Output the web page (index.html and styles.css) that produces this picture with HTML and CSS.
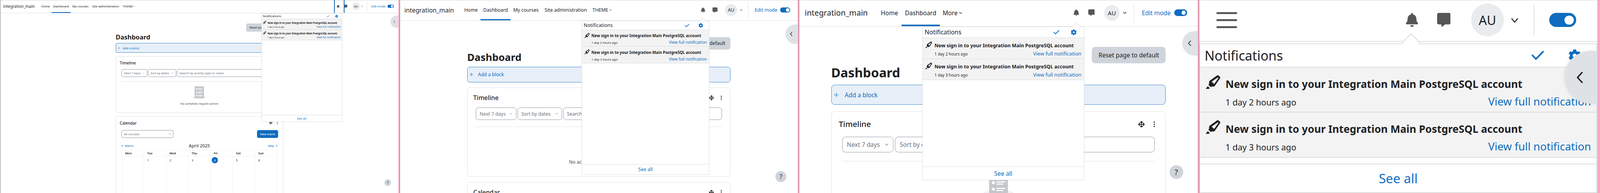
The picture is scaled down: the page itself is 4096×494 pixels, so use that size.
FILE: index.html
```html
<!DOCTYPE html>
<html lang="en">
<head>
<meta charset="utf-8">
<title>Dashboard</title>
<link rel="stylesheet" href="styles.css">
</head>
<body>
<svg class="defs" width="0" height="0" aria-hidden="true">
  <symbol id="i-bell" viewBox="0 0 448 512"><path d="M224 512c35.32 0 63.97-28.65 63.97-64H160.03c0 35.35 28.65 64 63.97 64zm215.39-149.71c-19.32-20.76-55.47-51.99-55.47-154.29 0-77.7-54.48-139.9-127.94-155.16V32c0-17.67-14.32-32-31.98-32s-31.98 14.33-31.98 32v20.84C118.56 68.1 64.08 130.3 64.08 208c0 102.3-36.15 133.53-55.47 154.29-6 6.45-8.66 14.16-8.61 21.71.11 16.4 12.98 32 32.1 32h383.8c19.12 0 32-15.6 32.1-32 .05-7.55-2.61-15.27-8.61-21.71z"/></symbol>
  <symbol id="i-msg" viewBox="0 0 64 66"><path d="M8 0h48a8 8 0 0 1 8 8v38a8 8 0 0 1-8 8H38L22 65.500a2 2 0 0 1-2-1.500V54H8a8 8 0 0 1-8-8V8a8 8 0 0 1 8-8z"/></symbol>
  <symbol id="i-gear" viewBox="0 0 512 512"><path d="M487.4 315.700l-42.600-24.600c4.300-23.200 4.300-47 0-70.200l42.600-24.600c4.900-2.800 7.100-8.600 5.500-14-11.100-35.600-30-67.800-54.700-94.600-3.800-4.100-10-5.100-14.800-2.300L380.800 110c-17.900-15.400-38.500-27.300-60.800-35.100V25.800c0-5.600-3.900-10.500-9.400-11.700-36.700-8.200-74.300-7.800-109.200 0-5.500 1.200-9.400 6.100-9.400 11.700V75c-22.200 7.900-42.800 19.800-60.800 35.100L88.700 85.500c-4.900-2.800-11-1.900-14.800 2.300-24.700 26.700-43.600 58.900-54.700 94.600-1.700 5.400.6 11.200 5.500 14L67.300 221c-4.300 23.200-4.300 47 0 70.200l-42.600 24.600c-4.900 2.800-7.100 8.600-5.500 14 11.100 35.600 30 67.800 54.700 94.600 3.800 4.100 10 5.100 14.800 2.300l42.600-24.600c17.900 15.400 38.500 27.300 60.800 35.100v49.200c0 5.600 3.900 10.500 9.400 11.700 36.700 8.200 74.300 7.800 109.200 0 5.500-1.200 9.400-6.100 9.400-11.700v-49.200c22.200-7.900 42.800-19.800 60.800-35.100l42.600 24.600c4.900 2.800 11 1.900 14.800-2.300 24.700-26.700 43.600-58.900 54.700-94.600 1.500-5.500-.7-11.300-5.600-14.100zM256 336c-44.100 0-80-35.900-80-80s35.900-80 80-80 80 35.900 80 80-35.900 80-80 80z"/></symbol>
  <symbol id="i-check" viewBox="0 0 60 44"><path d="M4 22l17 18L56 4" fill="none" stroke="currentColor" stroke-width="8" stroke-linecap="round" stroke-linejoin="round"/></symbol>
  <symbol id="i-pen" viewBox="0 0 206 200"><path fill-rule="evenodd" d="M160 6q10-6 18 0l22 20q8 8 2 18l-76 112q-6 8-16 8H88q-6 0-10 4-6 4-12 0L40 144q-6-6 0-12 6-6 6-14V96q0-8 8-14zM168 34l-86 60 36 34 58-84q2-4-2-8-4-4-6-2z"/><path d="M26 160l30 26q-4 8-12 10l-38 2q-8 0-4-8z"/></symbol>
  <symbol id="i-chev" viewBox="0 0 16 16"><path d="M3 5.500l5 6 5-6" fill="none" stroke="currentColor" stroke-width="1.800" stroke-linecap="round" stroke-linejoin="round"/></symbol>
  <symbol id="i-left" viewBox="0 0 16 28"><path d="M13 3L3 14l10 11" fill="none" stroke="currentColor" stroke-width="3" stroke-linecap="round" stroke-linejoin="round"/></symbol>
  <symbol id="i-plus" viewBox="0 0 16 16"><path d="M8 1.500v13M1.500 8h13" fill="none" stroke="currentColor" stroke-width="1.600" stroke-linecap="round"/></symbol>
  <symbol id="i-move" viewBox="0 0 16 16"><path d="M8 1v14M1 8h14" fill="none" stroke="currentColor" stroke-width="1.800"/><path d="M8 0l3.400 3.600H4.600zM8 16l-3.400-3.600h6.800zM0 8l3.400-3.400v6.800zM16 8l-3.400 3.400V4.600z"/></symbol>
  <symbol id="i-dots" viewBox="0 0 4 16"><circle cx="2" cy="2" r="1.900"/><circle cx="2" cy="8" r="1.900"/><circle cx="2" cy="14" r="1.900"/></symbol>
  <symbol id="i-empty" viewBox="0 0 70 60"><ellipse cx="35" cy="52" rx="35" ry="7" fill="#f1f2f3"/><rect x="13" y="0" width="44" height="56" fill="#c4c8cc"/><g fill="#fff"><circle cx="23" cy="12" r="3.500"/><circle cx="23" cy="28" r="3.500"/><circle cx="23" cy="43" r="3.500"/><rect x="30" y="9" width="21" height="2.500"/><rect x="30" y="14" width="16" height="2.500"/><rect x="30" y="25" width="21" height="2.500"/><rect x="30" y="30" width="16" height="2.500"/><rect x="30" y="40" width="21" height="2.500"/><rect x="30" y="45" width="16" height="2.500"/></g></symbol>
</svg>

<div class="wall">

<section class="panel p1">
  <header class="top">
    <span class="brand">integration_main</span>
    <nav class="nav">
      <a class="nav-i w-home">Home</a>
      <a class="nav-i w-dash active">Dashboard</a>
      <a class="nav-i w-my">My courses</a>
      <a class="nav-i w-site">Site administration</a>
      <a class="nav-i w-more">THEME <svg class="caret"><use href="#i-chev"/></svg></a>
    </nav>
    <div class="tools">
      <span class="tool focus"><svg class="bell"><use href="#i-bell"/></svg></span>
      <span class="tool"><svg class="msg"><use href="#i-msg"/></svg></span>
      <span class="avatar">AU</span>
      <svg class="ch"><use href="#i-chev"/></svg>
      <span class="sep"></span>
      <span class="edit-label">Edit mode</span>
      <span class="toggle"><i></i></span>
    </div>
  </header>
  <main class="main">
    <div class="reset-row"><button class="reset">Reset page to default</button></div>
    <h1>Dashboard</h1>
    <div class="addblock"><svg class="plus"><use href="#i-plus"/></svg><span>Add a block</span></div>
    <div class="card timeline">
      <div class="card-head"><h2>Timeline</h2><svg class="move"><use href="#i-move"/></svg><svg class="dots"><use href="#i-dots"/></svg></div>
      <div class="filters">
        <div class="fld f1">Next 7 days <svg class="ch2"><use href="#i-chev"/></svg></div>
        <div class="fld f2">Sort by dates <svg class="ch2"><use href="#i-chev"/></svg></div>
        <div class="fld f3">Search by activity type or name</div>
      </div>
      <div class="rule"></div>
      <div class="empty"><svg class="emp"><use href="#i-empty"/></svg><p>No activities require action</p></div>
    </div>
    <div class="card calendar">
      <div class="card-head"><h2>Calendar</h2><svg class="move"><use href="#i-move"/></svg><svg class="dots"><use href="#i-dots"/></svg></div>
      <div class="cal-bar">
        <div class="fld sel">All courses <svg class="ch3"><use href="#i-chev"/></svg></div>
        <button class="newev">New event</button>
      </div>
      <div class="cal-nav">
        <a><i class="tri-l"></i>March</a>
        <strong>April 2025</strong>
        <a>May<i class="tri-r"></i></a>
      </div>
      <div class="cal-grid">
        <b>Mon</b><b>Tue</b><b>Wed</b><b>Thu</b><b>Fri</b><b>Sat</b><b>Sun</b>
        <span></span><span>1</span><span>2</span><span>3</span><span class="today"><em>4</em></span><span>5</span><span>6</span>
      </div>
    </div>
  </main>
  <div class="pop">
    <i class="arrow"></i>
    <div class="pop-head"><span>Notifications</span><svg class="check"><use href="#i-check"/></svg><svg class="gear"><use href="#i-gear"/></svg></div>
    <div class="note"><svg class="pen"><use href="#i-pen"/></svg><div class="note-b"><strong>New sign in to your Integration Main PostgreSQL account</strong><div class="note-f"><span>1 day 2 hours ago</span><a>View full notification</a></div></div></div>
    <div class="note"><svg class="pen"><use href="#i-pen"/></svg><div class="note-b"><strong>New sign in to your Integration Main PostgreSQL account</strong><div class="note-f"><span>1 day 3 hours ago</span><a>View full notification</a></div></div></div>
    <div class="pop-space"></div>
    <div class="pop-foot">See all</div>
  </div>
  <div class="drawer"><svg class="left"><use href="#i-left"/></svg></div>
  <div class="help">?</div>
</section>

<section class="panel p2">
  <header class="top">
    <span class="brand">integration_main</span>
    <nav class="nav">
      <a class="nav-i w-home">Home</a>
      <a class="nav-i w-dash active">Dashboard</a>
      <a class="nav-i w-my">My courses</a>
      <a class="nav-i w-site">Site administration</a>
      <a class="nav-i w-more">THEME <svg class="caret"><use href="#i-chev"/></svg></a>
    </nav>
    <div class="tools">
      <span class="tool"><svg class="bell"><use href="#i-bell"/></svg></span>
      <span class="tool"><svg class="msg"><use href="#i-msg"/></svg></span>
      <span class="avatar">AU</span>
      <svg class="ch"><use href="#i-chev"/></svg>
      <span class="sep"></span>
      <span class="edit-label">Edit mode</span>
      <span class="toggle"><i></i></span>
    </div>
  </header>
  <main class="main">
    <div class="reset-row"><button class="reset">Reset page to default</button></div>
    <h1>Dashboard</h1>
    <div class="addblock"><svg class="plus"><use href="#i-plus"/></svg><span>Add a block</span></div>
    <div class="card timeline">
      <div class="card-head"><h2>Timeline</h2><svg class="move"><use href="#i-move"/></svg><svg class="dots"><use href="#i-dots"/></svg></div>
      <div class="filters">
        <div class="fld f1">Next 7 days <svg class="ch2"><use href="#i-chev"/></svg></div>
        <div class="fld f2">Sort by dates <svg class="ch2"><use href="#i-chev"/></svg></div>
        <div class="fld f3">Search by activity type or name</div>
      </div>
      <div class="rule"></div>
      <div class="empty"><svg class="emp"><use href="#i-empty"/></svg><p>No activities require action</p></div>
    </div>
    <div class="card calendar">
      <div class="card-head"><h2>Calendar</h2><svg class="move"><use href="#i-move"/></svg><svg class="dots"><use href="#i-dots"/></svg></div>
    </div>
  </main>
  <div class="pop">
    <i class="arrow"></i>
    <div class="pop-head"><span>Notifications</span><svg class="check"><use href="#i-check"/></svg><svg class="gear"><use href="#i-gear"/></svg></div>
    <div class="note"><svg class="pen"><use href="#i-pen"/></svg><div class="note-b"><strong>New sign in to your Integration Main PostgreSQL account</strong><div class="note-f"><span>1 day 2 hours ago</span><a>View full notification</a></div></div></div>
    <div class="note"><svg class="pen"><use href="#i-pen"/></svg><div class="note-b"><strong>New sign in to your Integration Main PostgreSQL account</strong><div class="note-f"><span>1 day 3 hours ago</span><a>View full notification</a></div></div></div>
    <div class="pop-space"></div>
    <div class="pop-foot">See all</div>
  </div>
  <div class="drawer"><svg class="left"><use href="#i-left"/></svg></div>
  <div class="help">?</div>
</section>

<section class="panel p3">
  <header class="top">
    <span class="brand">integration_main</span>
    <nav class="nav">
      <a class="nav-i w-home">Home</a>
      <a class="nav-i w-dash active">Dashboard</a>
      <a class="nav-i w-my">More <svg class="caret"><use href="#i-chev"/></svg></a>
    </nav>
    <div class="tools">
      <span class="tool"><svg class="bell"><use href="#i-bell"/></svg></span>
      <span class="tool"><svg class="msg"><use href="#i-msg"/></svg></span>
      <span class="avatar">AU</span>
      <svg class="ch"><use href="#i-chev"/></svg>
      <span class="sep"></span>
      <span class="edit-label">Edit mode</span>
      <span class="toggle"><i></i></span>
    </div>
  </header>
  <main class="main">
    <div class="reset-row"><button class="reset">Reset page to default</button></div>
    <h1>Dashboard</h1>
    <div class="addblock"><svg class="plus"><use href="#i-plus"/></svg><span>Add a block</span></div>
    <div class="card timeline">
      <div class="card-head"><h2>Timeline</h2><svg class="move"><use href="#i-move"/></svg><svg class="dots"><use href="#i-dots"/></svg></div>
      <div class="filters">
        <div class="fld f1">Next 7 days <svg class="ch2"><use href="#i-chev"/></svg></div>
        <div class="fld f2">Sort by dates <svg class="ch2"><use href="#i-chev"/></svg></div>
        <div class="fld f3">Search by activity type or name</div>
      </div>
      <div class="rule"></div>
      <div class="empty"><svg class="emp"><use href="#i-empty"/></svg></div>
    </div>
  </main>
  <div class="pop">
    <i class="arrow"></i>
    <div class="pop-head"><span>Notifications</span><svg class="check"><use href="#i-check"/></svg><svg class="gear"><use href="#i-gear"/></svg></div>
    <div class="note"><svg class="pen"><use href="#i-pen"/></svg><div class="note-b"><strong>New sign in to your Integration Main PostgreSQL account</strong><div class="note-f"><span>1 day 2 hours ago</span><a>View full notification</a></div></div></div>
    <div class="note"><svg class="pen"><use href="#i-pen"/></svg><div class="note-b"><strong>New sign in to your Integration Main PostgreSQL account</strong><div class="note-f"><span>1 day 3 hours ago</span><a>View full notification</a></div></div></div>
    <div class="pop-space"></div>
    <div class="pop-foot">See all</div>
  </div>
  <div class="drawer"><svg class="left"><use href="#i-left"/></svg></div>
  <div class="help">?</div>
</section>

<section class="panel p4">
  <header class="top">
    <button class="burger" aria-label="Menu"><i></i><i></i><i></i></button>
    <div class="tools">
      <span class="tool"><svg class="bell"><use href="#i-bell"/></svg></span>
      <span class="tool"><svg class="msg"><use href="#i-msg"/></svg></span>
      <span class="avatar">AU</span>
      <svg class="ch"><use href="#i-chev"/></svg>
      <span class="sep"></span>
      <span class="toggle"><i></i></span>
    </div>
  </header>
  <div class="pop">
    <i class="arrow"></i>
    <div class="pop-head"><span>Notifications</span><svg class="check"><use href="#i-check"/></svg><svg class="gear"><use href="#i-gear"/></svg></div>
    <div class="note"><svg class="pen"><use href="#i-pen"/></svg><div class="note-b"><strong>New sign in to your Integration Main PostgreSQL account</strong><div class="note-f"><span>1 day 2 hours ago</span><a>View full notification</a></div></div></div>
    <div class="note"><svg class="pen"><use href="#i-pen"/></svg><div class="note-b"><strong>New sign in to your Integration Main PostgreSQL account</strong><div class="note-f"><span>1 day 3 hours ago</span><a>View full notification</a></div></div></div>
    <div class="pop-space"></div>
    <div class="pop-foot">See all</div>
  </div>
  <div class="drawer"><svg class="left"><use href="#i-left"/></svg></div>
</section>

</div>
</body>
</html>
```
FILE: styles.css
```css
* { box-sizing: border-box; }
html, body { margin: 0; padding: 0; background: #ffa6c4; overflow: hidden; }
body { width: 4096px; height: 494px; font-family: "Noto Sans", "Liberation Sans", sans-serif; color: #1d2125; }
.defs { position: absolute; }
.wall { display: flex; gap: 3px; width: 4096px; height: 494px; }

/* each panel is one responsive capture, scaled by --u (one source px) */
.panel {
  position: relative; flex: none; height: 494px; overflow: hidden; background: #fff;
  border-left: 1px solid #777;
  font-size: calc(var(--u) * 14.2);
}
.p1 { --u: 0.5464px; width: 1020px; --pop-h: calc(var(--u) * 509); --pop-r: calc(var(--u) * 263); --pr: calc(var(--u) * 22); --shift: calc(var(--u) * 3); }
.p2 { --u: 0.860px; width: 1019px; --pop-h: calc(var(--u) * 458); --pop-r: calc(var(--u) * 263); --pr: calc(var(--u) * 22); --shift: 0px; }
.p3 { --u: 1.0928px; width: 1021px; --pop-h: calc(var(--u) * 360); --pop-r: calc(var(--u) * 265.5); --pr: calc(var(--u) * 25); --shift: 0px; }
.p4 { --u: 2.3278px; width: 1020px; --pop-h: 383px; --pop-r: 0px; --pr: calc(var(--u) * 23); --shift: 0px; }

/* header */
.top {
  display: flex; align-items: center; height: calc(var(--u) * 62);
  padding: 0 var(--pr) calc(var(--u) * 1) calc(var(--u) * 13);
  border-bottom: 1px solid #dee2e6; box-shadow: inset 0 1px #d6d6d6; position: relative;
}
.p4 .top { height: calc(var(--u) * 46); padding-left: calc(var(--u) * 19); border-bottom-width: 2px; }
.brand { flex: none; width: calc(var(--u) * 170); font-size: calc(var(--u) * 18.4); white-space: nowrap; }
.nav { display: flex; align-self: stretch; }
.nav-i { display: flex; align-items: center; justify-content: center; white-space: nowrap; position: relative; color: #1d2125; }
.w-home { width: calc(var(--u) * 57); }
.w-dash { width: calc(var(--u) * 89); }
.w-my { width: calc(var(--u) * 92); }
.w-site { width: calc(var(--u) * 145); }
.w-more { width: calc(var(--u) * 72); }
.p3 .w-my { width: calc(var(--u) * 60); }
.active::after { content: ""; position: absolute; left: 0; right: 0; bottom: calc(var(--u) * -1); height: calc(var(--u) * 3.5); background: #0f6cbf; }
.caret { width: calc(var(--u) * 9); height: calc(var(--u) * 9); margin-left: calc(var(--u) * 2); }

.tools { display: flex; align-items: center; align-self: stretch; margin-left: auto; color: #565656; }
.tool { display: flex; justify-content: center; width: calc(var(--u) * 35); fill: #565656; }
.bell { width: calc(var(--u) * 13.5); height: calc(var(--u) * 15.5); }
.msg { width: calc(var(--u) * 15); height: calc(var(--u) * 15.5); }
.avatar {
  display: flex; align-items: center; justify-content: center; width: calc(var(--u) * 36); height: calc(var(--u) * 36);
  margin-left: calc(var(--u) * 12.5); border-radius: 50%; background: #e9ecef; color: #1d2125; font-size: calc(var(--u) * 14);
}
.ch { width: calc(var(--u) * 10); height: calc(var(--u) * 10); margin: 0 calc(var(--u) * 16) 0 calc(var(--u) * 7); color: #1d2125; }
.sep { width: 1px; height: calc(var(--u) * 46); background: #dee2e6; }
.edit-label { width: calc(var(--u) * 70); margin: 0 calc(var(--u) * 6) 0 calc(var(--u) * 18); color: #0f6cbf; white-space: nowrap; }
.toggle {
  display: flex; align-items: center; justify-content: flex-end; width: calc(var(--u) * 30); height: calc(var(--u) * 15.5);
  padding-right: calc(var(--u) * 3); border-radius: calc(var(--u) * 8); background: #0f6cbf;
}
.toggle i { width: calc(var(--u) * 10); height: calc(var(--u) * 10); border-radius: 50%; background: #fff; }
.p4 .toggle { margin-left: calc(var(--u) * 16); }
.p4 .sep { width: 2px; height: calc(var(--u) * 34); }
.burger { display: flex; flex-direction: column; gap: calc(var(--u) * 5.6); padding: 0; border: 0; background: none; }
.burger i { width: calc(var(--u) * 22.5); height: calc(var(--u) * 2.2); border-radius: 9px; background: #565a5e; }
.focus { position: relative; align-self: stretch; align-items: center; }
.focus::before {
  content: ""; position: absolute; top: 0; bottom: calc(var(--u) * -1); left: 50%; width: calc(var(--u) * 42); margin-left: calc(var(--u) * -21);
  border: solid #0f6cbf; border-width: 0 2px;
}

/* main column */
.main { width: calc(var(--u) * 784); margin: 0 auto; padding-top: calc(var(--u) * 48); }
.reset-row { display: flex; justify-content: flex-end; }
.reset {
  width: calc(var(--u) * 173); height: calc(var(--u) * 38); padding: 0; border: 0; border-radius: calc(var(--u) * 8);
  background: #ced4da; color: #1d2125; font: inherit;
}
h1 { margin: calc(var(--u) * 1 + var(--shift)) 0 0; height: calc(var(--u) * 43); line-height: calc(var(--u) * 43); font-size: calc(var(--u) * 30); font-weight: 700; }
.addblock {
  display: flex; align-items: center; height: calc(var(--u) * 46); margin-top: calc(var(--u) * 7);
  padding-left: calc(var(--u) * 6); border: 1px solid #3d88cc; border-radius: calc(var(--u) * 8);
  background: #e7eff8; color: #0f6cbf;
}
.plus { width: calc(var(--u) * 11); height: calc(var(--u) * 11); margin-right: calc(var(--u) * 14); }
.card { margin-top: calc(var(--u) * 16); border: 1px solid #dcdfe2; border-radius: calc(var(--u) * 8); background: #fff; }
.timeline { height: calc(var(--u) * 265); }
.card-head { display: flex; align-items: center; height: calc(var(--u) * 58); padding: 0 calc(var(--u) * 24) 0 calc(var(--u) * 17); }
.card-head h2 { margin: 0 auto 0 0; font-size: calc(var(--u) * 18.4); font-weight: 500; }
.move { width: calc(var(--u) * 15); height: calc(var(--u) * 15); margin-right: calc(var(--u) * 21); fill: #1d2125; stroke: #1d2125; }
.dots { width: calc(var(--u) * 3.5); height: calc(var(--u) * 13); fill: #1d2125; }
.filters { display: flex; gap: calc(var(--u) * 4); padding: 0 calc(var(--u) * 25); }
.fld {
  display: flex; align-items: center; height: calc(var(--u) * 37); padding: 0 calc(var(--u) * 10);
  border: 1px solid #8f959e; border-radius: calc(var(--u) * 8); color: #6a737b; white-space: nowrap; background: #fff;
}
.f1 { width: calc(var(--u) * 120); }
.f2 { width: calc(var(--u) * 132); }
.f3 { flex: 1; }
.ch2 { width: calc(var(--u) * 9); height: calc(var(--u) * 9); margin-left: auto; color: #6a737b; }
.rule { height: 1px; margin: calc(var(--u) * 20) calc(var(--u) * 25) 0; background: #dee2e6; }
.empty { display: flex; flex-direction: column; align-items: center; padding-top: calc(var(--u) * 22); }
.emp { width: calc(var(--u) * 70); height: calc(var(--u) * 60); }
.empty p { margin: calc(var(--u) * 12) 0 0; color: #495057; }

.calendar { height: calc(var(--u) * 900); }
.cal-bar { display: flex; justify-content: space-between; padding: calc(var(--u) * 5) calc(var(--u) * 22) 0 calc(var(--u) * 25); }
.sel { width: calc(var(--u) * 243); }
.ch3 { width: calc(var(--u) * 10); height: calc(var(--u) * 10); margin-left: auto; color: #1d2125; }
.newev { width: calc(var(--u) * 98); height: calc(var(--u) * 37); padding: 0; border: 0; border-radius: calc(var(--u) * 8); background: #0f6cbf; color: #fff; font: inherit; }
.cal-nav { display: flex; align-items: center; justify-content: space-between; height: calc(var(--u) * 42); margin-top: calc(var(--u) * 15); padding: 0 calc(var(--u) * 25); color: #0f6cbf; }
.cal-nav a { display: flex; align-items: center; width: calc(var(--u) * 90); }
.cal-nav a:last-child { justify-content: flex-end; }
.cal-nav strong { color: #1d2125; font-size: calc(var(--u) * 21); font-weight: 400; }
.tri-l { width: 0; height: 0; margin-right: calc(var(--u) * 10); border: solid transparent; border-width: calc(var(--u) * 4) calc(var(--u) * 7) calc(var(--u) * 4) 0; border-right-color: #0f6cbf; }
.tri-r { width: 0; height: 0; margin-left: calc(var(--u) * 10); border: solid transparent; border-width: calc(var(--u) * 4) 0 calc(var(--u) * 4) calc(var(--u) * 7); border-left-color: #0f6cbf; }
.cal-grid { display: grid; grid-template-columns: repeat(7, 1fr); margin: 0 calc(var(--u) * 25) 0 calc(var(--u) * 26); border-top: 1px dotted #e6e6e6; border-left: 1px dotted #e6e6e6; }
.cal-grid b, .cal-grid span { border-right: 1px dotted #e6e6e6; border-bottom: 1px dotted #e6e6e6; padding-left: calc(var(--u) * 14); }
.cal-grid b { display: flex; align-items: center; height: calc(var(--u) * 26); font-weight: 600; }
.cal-grid span { height: calc(var(--u) * 240); padding-top: calc(var(--u) * 9); }
.cal-grid .today { padding-left: calc(var(--u) * 4); padding-top: calc(var(--u) * 4); }
.today em { display: flex; align-items: center; justify-content: center; width: calc(var(--u) * 30); height: calc(var(--u) * 30); border-radius: 50%; background: #0f6cbf; color: #fff; font-style: normal; }

/* notification popover, over the page */
.pop {
  position: absolute; top: calc(var(--u) * 62); right: var(--pop-r); width: calc(var(--u) * 380); height: var(--pop-h);
  display: flex; flex-direction: column; border: 1px solid #ddd; background: #fff;
}
.p4 .pop { top: calc(var(--u) * 47.5); left: 0; width: auto; border-width: 2px; }
.arrow {
  position: absolute; top: calc(var(--u) * -7.5); right: calc(var(--u) * 11); width: calc(var(--u) * 14); height: calc(var(--u) * 14);
  border: solid #ddd; border-width: 1px 0 0 1px; background: #fff; transform: rotate(45deg);
}
.p4 .arrow { right: calc(var(--u) * 197); top: calc(var(--u) * -9); border-width: 2px 0 0 2px; }
.pop-head { display: flex; align-items: center; flex: none; height: calc(var(--u) * 26); padding: 0 calc(var(--u) * 17) 0 calc(var(--u) * 5); border-bottom: 1px solid #ddd; font-size: calc(var(--u) * 14.5); }
.p4 .pop-head { border-bottom-width: 2px; }
.pop-head span { margin-right: auto; }
.check { width: calc(var(--u) * 13.5); height: calc(var(--u) * 10); color: #0f6cbf; }
.gear { width: calc(var(--u) * 14); height: calc(var(--u) * 14); margin-left: calc(var(--u) * 27); fill: #0f6cbf; }
.note { display: flex; flex: none; height: calc(var(--u) * 49.5); padding: calc(var(--u) * 8) calc(var(--u) * 6) 0 calc(var(--u) * 6.5); border-bottom: 1px solid #ddd; background: #f3f3f3; }
.p4 .note { border-bottom-width: 2px; }
.pen { flex: none; width: calc(var(--u) * 16); height: calc(var(--u) * 15.5); margin-right: calc(var(--u) * 5.5); fill: #1d2125; }
.note-b { flex: 1; min-width: 0; padding-top: calc(var(--u) * 3); }
.note-b strong { display: block; font-size: calc(var(--u) * 11.4); font-weight: 700; line-height: calc(var(--u) * 14); white-space: nowrap; }
.note-f { display: flex; align-items: baseline; justify-content: space-between; margin-top: calc(var(--u) * 5); font-size: calc(var(--u) * 9.3); line-height: calc(var(--u) * 14); }
.note-f a { color: #0f6cbf; font-size: calc(var(--u) * 11.9); }
.pop-space { flex: 1; }
.pop-foot { flex: none; display: flex; align-items: center; justify-content: center; height: calc(var(--u) * 31); border-top: 1px solid #ddd; color: #0f6cbf; }
.p4 .pop-foot { border-top-width: 2px; }

/* floating controls */
.drawer {
  position: absolute; top: calc(var(--u) * 73); right: 0; width: calc(var(--u) * 36); height: calc(var(--u) * 57);
  display: flex; align-items: center; justify-content: center; padding-right: calc(var(--u) * 2);
  border-radius: calc(var(--u) * 29) 0 0 calc(var(--u) * 29); background: #dee2e6; box-shadow: 0 0 calc(var(--u) * 5) rgba(0, 0, 0, .08); color: #1d2125;
}
.p4 .drawer { top: calc(var(--u) * 56); height: calc(var(--u) * 58); }
.left { width: calc(var(--u) * 8); height: calc(var(--u) * 14); }
.help {
  position: absolute; right: calc(var(--u) * 34); bottom: calc(var(--u) * 33); width: calc(var(--u) * 32); height: calc(var(--u) * 32);
  display: flex; align-items: center; justify-content: center; border-radius: 50%; background: #ced4da; font-size: calc(var(--u) * 18);
}
```
